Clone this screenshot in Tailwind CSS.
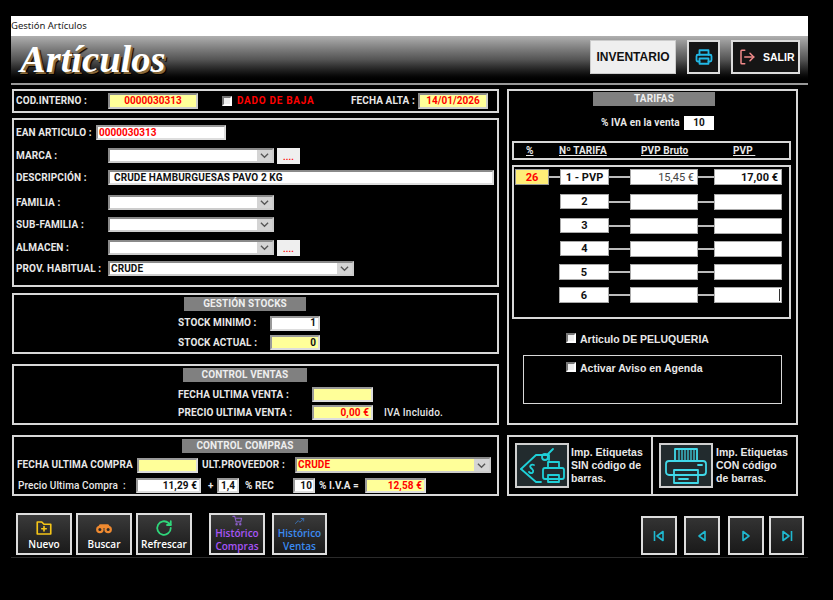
<!DOCTYPE html>
<html lang="es">
<head>
<meta charset="utf-8">
<title>Gestión Artículos</title>
<script src="https://cdn.jsdelivr.net/npm/@tailwindcss/browser@4"></script>
</head>
<body class="bg-black">
<div class="w-[833px] h-[600px] overflow-hidden bg-black pt-[16px] pl-[11px] font-['Roboto',sans-serif] text-[10px] font-bold tracking-[0.1px] text-[#e8e8e8] leading-none whitespace-nowrap">
<div class="w-[797px]">

  <div class="h-[20px] bg-white text-[#222] font-['Noto_Sans',sans-serif] font-normal tracking-normal text-[9.5px] flex items-center">Gestión Artículos</div>

  <header class="h-[49px] pb-[2px] border-b-2 border-[#999] bg-gradient-to-b from-[#b0b0b0] via-[#555] to-black flex items-start">
    <div class="ml-[9px] mt-[3px] font-['Liberation_Serif',serif] italic text-[38.5px] leading-[40px] tracking-normal text-white [text-shadow:2px_2px_0_#8a6a3a,3px_3px_1px_#000]">Artículos</div>
    <div class="ml-auto mt-[4px] mr-[8px] flex">
      <div class="w-[86px] h-[34px] bg-[#efefef] border border-[#ccc] flex items-center justify-center text-[#111] text-[12px] font-['Liberation_Sans',sans-serif] tracking-normal">INVENTARIO</div>
      <div class="ml-[11px] w-[33px] h-[34px] bg-[#151515] border-2 border-[#ddd] flex items-center justify-center">
        <svg class="w-[18px] h-[18px]" viewBox="0 0 24 24" fill="none" stroke="#22b8e6" stroke-width="2.4" stroke-linecap="round" stroke-linejoin="round"><path d="M6 9V3h12v6"/><path d="M6 18H4a2 2 0 0 1-2-2v-5a2 2 0 0 1 2-2h16a2 2 0 0 1 2 2v5a2 2 0 0 1-2 2h-2"/><rect x="6" y="14" width="12" height="7"/></svg>
      </div>
      <div class="ml-[11px] w-[69px] h-[34px] bg-[#151515] border-2 border-[#ddd] flex items-center pl-[5px] gap-[7px] text-white text-[10.5px] font-['Liberation_Sans',sans-serif] tracking-normal">
        <svg class="w-[18px] h-[18px]" viewBox="0 0 24 24" fill="none" stroke="#f08a8a" stroke-width="2" stroke-linecap="round" stroke-linejoin="round"><path d="M9 21H5a1 1 0 0 1-1-1V4a1 1 0 0 1 1-1h4"/><path d="M16 17l5-5-5-5"/><path d="M21 12H9"/></svg>
        SALIR
      </div>
    </div>
  </header>

  <main class="mt-[4px] ml-[1px] flex items-start">
    <div class="w-[487px] flex flex-col">

      <section class="h-[24px] border-2 border-[#d8d8d8] flex items-center pl-[2px]">
        <span class="w-[92px]">COD.INTERNO :</span>
        <div class="w-[90px] h-[16px] bg-[#ffff99] border-2 border-[#8a8a8a] border-b-[#ccc] border-r-[#ccc] flex items-center justify-center text-[#f00] text-[10px] tracking-normal">0000030313</div>
        <div class="ml-[24px] w-[10px] h-[10px] bg-[#eee] border-2 border-[#777] border-b-white border-r-white"></div>
        <span class="ml-[5px] w-[114px] text-[#f00] tracking-[0.7px]">DADO DE BAJA</span>
        <span class="w-[67px]">FECHA ALTA :</span>
        <div class="w-[70px] h-[16px] bg-[#ffff99] border-2 border-[#8a8a8a] border-b-[#ccc] border-r-[#ccc] flex items-center justify-center text-[#f00] text-[10px] tracking-normal">14/01/2026</div>
      </section>

      <section class="mt-[5px] h-[169px] border-2 border-[#d8d8d8] pl-[2px] pt-[5px] flex flex-col">
        <div class="h-[15px] flex items-center">
          <span class="w-[80px]">EAN ARTICULO :</span>
          <div class="w-[130px] h-[15px] bg-white border-2 border-[#999] border-b-[#ddd] border-r-[#ddd] pl-[1px] flex items-center text-[#f00] text-[10px] tracking-normal">0000030313</div>
        </div>
        <div class="mt-[8px] h-[15px] flex items-center">
          <span class="w-[92px]">MARCA :</span>
          <div class="w-[166px] h-[15px] bg-white border-2 border-[#8a8a8a] border-b-[#ccc] border-r-[#ccc] flex justify-end"><div class="w-[15px] bg-[#d4d4d4] flex items-center justify-center"><svg class="w-[9px] h-[9px]" viewBox="0 0 10 10" fill="none" stroke="#555" stroke-width="1.4"><path d="M1 3l4 4 4-4"/></svg></div></div>
          <div class="ml-[3px] w-[23px] h-[16px] bg-[#efefef] text-[#f00] flex items-end justify-center pb-[2px] text-[9px]">....</div>
        </div>
        <div class="mt-[7px] h-[15px] flex items-center">
          <span class="w-[92px]">DESCRIPCIÓN :</span>
          <div class="w-[386px] h-[15px] bg-white border-2 border-[#8a8a8a] border-b-[#ddd] border-r-[#ddd] pl-[4px] flex items-center text-[#111]">CRUDE HAMBURGUESAS PAVO 2 KG</div>
        </div>
        <div class="mt-[10px] h-[15px] flex items-center">
          <span class="w-[92px]">FAMILIA :</span>
          <div class="w-[166px] h-[15px] bg-white border-2 border-[#8a8a8a] border-b-[#ccc] border-r-[#ccc] flex justify-end"><div class="w-[15px] bg-[#d4d4d4] flex items-center justify-center"><svg class="w-[9px] h-[9px]" viewBox="0 0 10 10" fill="none" stroke="#555" stroke-width="1.4"><path d="M1 3l4 4 4-4"/></svg></div></div>
        </div>
        <div class="mt-[7px] h-[15px] flex items-center">
          <span class="w-[92px]">SUB-FAMILIA :</span>
          <div class="w-[166px] h-[15px] bg-white border-2 border-[#8a8a8a] border-b-[#ccc] border-r-[#ccc] flex justify-end"><div class="w-[15px] bg-[#d4d4d4] flex items-center justify-center"><svg class="w-[9px] h-[9px]" viewBox="0 0 10 10" fill="none" stroke="#555" stroke-width="1.4"><path d="M1 3l4 4 4-4"/></svg></div></div>
        </div>
        <div class="mt-[8px] h-[15px] flex items-center">
          <span class="w-[92px]">ALMACEN :</span>
          <div class="w-[166px] h-[15px] bg-white border-2 border-[#8a8a8a] border-b-[#ccc] border-r-[#ccc] flex justify-end"><div class="w-[15px] bg-[#d4d4d4] flex items-center justify-center"><svg class="w-[9px] h-[9px]" viewBox="0 0 10 10" fill="none" stroke="#555" stroke-width="1.4"><path d="M1 3l4 4 4-4"/></svg></div></div>
          <div class="ml-[3px] w-[23px] h-[16px] bg-[#efefef] text-[#f00] flex items-end justify-center pb-[2px] text-[9px]">....</div>
        </div>
        <div class="mt-[6px] h-[15px] flex items-center">
          <span class="w-[92px]">PROV. HABITUAL :</span>
          <div class="w-[246px] h-[15px] bg-white border-2 border-[#8a8a8a] border-b-[#ccc] border-r-[#ccc] flex justify-between"><span class="pl-[1px] self-center text-[#111]">CRUDE</span><div class="w-[15px] bg-[#d4d4d4] flex items-center justify-center"><svg class="w-[9px] h-[9px]" viewBox="0 0 10 10" fill="none" stroke="#555" stroke-width="1.4"><path d="M1 3l4 4 4-4"/></svg></div></div>
        </div>
      </section>

      <section class="mt-[6px] h-[61px] border-2 border-[#d8d8d8] pt-[2px] flex flex-col">
        <div class="ml-[170px] w-[122px] h-[14px] bg-[#808080] flex items-center justify-center text-[#eee]">GESTIÓN STOCKS</div>
        <div class="mt-[5px] ml-[164px] h-[14px] flex items-center">
          <span class="w-[92px]">STOCK MINIMO :</span>
          <div class="w-[50px] h-[15px] bg-white border-2 border-[#999] border-b-[#ddd] border-r-[#ddd] pr-[2px] flex items-center justify-end text-[#111]">1</div>
        </div>
        <div class="mt-[5px] ml-[164px] h-[15px] flex items-center">
          <span class="w-[92px]">STOCK ACTUAL :</span>
          <div class="w-[50px] h-[15px] bg-[#ffff99] border-2 border-[#999] border-b-[#ddd] border-r-[#ddd] pr-[2px] flex items-center justify-end text-[#111]">0</div>
        </div>
      </section>

      <section class="mt-[10px] h-[61px] border-2 border-[#d8d8d8] pt-[2px] flex flex-col">
        <div class="ml-[169px] w-[124px] h-[14px] bg-[#808080] flex items-center justify-center text-[#eee]">CONTROL VENTAS</div>
        <div class="mt-[5px] ml-[164px] h-[15px] flex items-center">
          <span class="w-[134px]">FECHA ULTIMA VENTA :</span>
          <div class="w-[61px] h-[15px] bg-[#ffff99] border-2 border-[#999] border-b-[#ddd] border-r-[#ddd]"></div>
        </div>
        <div class="mt-[3px] ml-[164px] h-[15px] flex items-center">
          <span class="w-[134px]">PRECIO ULTIMA VENTA :</span>
          <div class="w-[61px] h-[15px] bg-[#ffff99] border-2 border-[#999] border-b-[#ddd] border-r-[#ddd] pr-[2px] flex items-center justify-end text-[#f00]">0,00 €</div>
          <span class="ml-[11px] font-medium text-[10px] tracking-[0.2px]">IVA Incluido.</span>
        </div>
      </section>

      <section class="mt-[10px] h-[61px] border-2 border-[#d8d8d8] pt-[2px] flex flex-col">
        <div class="ml-[168px] w-[126px] h-[14px] bg-[#808080] flex items-center justify-center text-[#eee]">CONTROL COMPRAS</div>
        <div class="mt-[4px] ml-[3px] h-[16px] flex items-center">
          <span class="w-[120px]">FECHA ULTIMA COMPRA</span>
          <div class="w-[61px] h-[15px] bg-[#ffff99] border-2 border-[#999] border-b-[#ddd] border-r-[#ddd]"></div>
          <span class="ml-[4px] w-[93px]">ULT.PROVEEDOR :</span>
          <div class="w-[196px] h-[16px] bg-[#ffff99] border-2 border-[#8a8a8a] border-b-[#ccc] border-r-[#ccc] flex justify-between"><span class="pl-[1px] self-center text-[#f00]">CRUDE</span><div class="w-[15px] bg-[#d4d4d4] flex items-center justify-center"><svg class="w-[9px] h-[9px]" viewBox="0 0 10 10" fill="none" stroke="#555" stroke-width="1.4"><path d="M1 3l4 4 4-4"/></svg></div></div>
        </div>
        <div class="mt-[5px] ml-[4px] h-[15px] flex items-center">
          <span class="w-[118px] font-medium text-[10px]">Precio Ultima Compra&nbsp; :</span>
          <div class="w-[65px] h-[15px] bg-white border-2 border-[#999] border-b-[#ddd] border-r-[#ddd] pr-[2px] flex items-center justify-end text-[#111]">11,29 €</div>
          <span class="ml-[7px] w-[9px]">+</span>
          <div class="w-[22px] h-[15px] bg-white border-2 border-[#999] border-b-[#ddd] border-r-[#ddd] flex items-center justify-center text-[#111]">1,4</div>
          <span class="ml-[6px] w-[48px]">% REC</span>
          <div class="w-[22px] h-[15px] bg-white border-2 border-[#999] border-b-[#ddd] border-r-[#ddd] pr-[1px] flex items-center justify-end text-[#111]">10</div>
          <span class="ml-[4px] w-[46px]">% I.V.A =</span>
          <div class="w-[61px] h-[15px] bg-[#ffff99] border-2 border-[#999] border-b-[#ddd] border-r-[#ddd] pr-[2px] flex items-center justify-end text-[#f00]">12,58 €</div>
        </div>
      </section>
    </div>

    <div class="ml-[8px] w-[291px] flex flex-col">
      <section class="h-[336px] border-2 border-[#d8d8d8] px-[3px] pt-[1px] flex flex-col">
        <div class="ml-[81px] w-[122px] h-[14px] bg-[#808080] flex items-center justify-center text-[#eee]">TARIFAS</div>
        <div class="mt-[10px] ml-[89px] h-[14px] flex items-center">
          <span class="w-[83px]">% IVA en la venta</span>
          <div class="w-[30px] h-[14px] bg-white flex items-center justify-center text-[#111]">10</div>
        </div>
        <div class="mt-[11px] w-[279px] h-[19px] border-2 border-[#d8d8d8] flex items-center underline">
          <span class="ml-[12px] w-[33px]">%</span>
          <span class="w-[82px]">Nº TARIFA</span>
          <span class="w-[92px]">PVP Bruto</span>
          <span>PVP&nbsp;</span>
        </div>
        <div class="mt-[5px] w-[279px] h-[154px] border-2 border-[#d8d8d8] pl-[1px] pt-[2px] flex flex-col text-[#111]">
          <div class="h-[16px] flex items-center">
            <div class="w-[34px] h-[16px] bg-[#ffee77] border border-[#999] flex items-center justify-center text-[#f00] text-[11px] tracking-normal">26</div>
            <div class="w-[11px] h-[2px] bg-[#bbb]"></div>
            <div class="w-[49px] h-[16px] bg-white border border-[#aaa] flex items-center justify-center text-[11px] tracking-normal">1 - PVP</div>
            <div class="w-[21px] h-[2px] bg-[#bbb]"></div>
            <div class="w-[68px] h-[16px] bg-white border border-[#aaa] pr-[3px] flex items-center justify-end text-[#444] font-normal text-[11px] tracking-normal">15,45 €</div>
            <div class="w-[16px] h-[2px] bg-[#bbb]"></div>
            <div class="w-[68px] h-[16px] bg-white border border-[#aaa] pr-[3px] flex items-center justify-end text-[11px] tracking-normal">17,00 €</div>
          </div>
          <div class="mt-[9px] h-[15px] flex items-center pl-[45px]">
            <div class="w-[49px] h-[15px] bg-white border border-[#aaa] flex items-center justify-center text-[11px]">2</div>
            <div class="w-[21px] h-[2px] bg-[#bbb]"></div>
            <div class="w-[68px] h-[16px] bg-white border border-[#aaa]"></div>
            <div class="w-[16px] h-[2px] bg-[#bbb]"></div>
            <div class="w-[68px] h-[16px] bg-white border border-[#aaa]"></div>
          </div>
          <div class="mt-[9px] h-[15px] flex items-center pl-[45px]">
            <div class="w-[49px] h-[15px] bg-white border border-[#aaa] flex items-center justify-center text-[11px]">3</div>
            <div class="w-[21px] h-[2px] bg-[#bbb]"></div>
            <div class="w-[68px] h-[16px] bg-white border border-[#aaa]"></div>
            <div class="w-[16px] h-[2px] bg-[#bbb]"></div>
            <div class="w-[68px] h-[16px] bg-white border border-[#aaa]"></div>
          </div>
          <div class="mt-[8px] h-[15px] flex items-center pl-[45px]">
            <div class="w-[49px] h-[15px] bg-white border border-[#aaa] flex items-center justify-center text-[11px]">4</div>
            <div class="w-[21px] h-[2px] bg-[#bbb]"></div>
            <div class="w-[68px] h-[16px] bg-white border border-[#aaa]"></div>
            <div class="w-[16px] h-[2px] bg-[#bbb]"></div>
            <div class="w-[68px] h-[16px] bg-white border border-[#aaa]"></div>
          </div>
          <div class="mt-[8px] h-[16px] flex items-center pl-[44px]">
            <div class="w-[50px] h-[16px] bg-white border border-[#aaa] flex items-center justify-center text-[11px]">5</div>
            <div class="w-[21px] h-[2px] bg-[#bbb]"></div>
            <div class="w-[68px] h-[16px] bg-white border border-[#aaa]"></div>
            <div class="w-[16px] h-[2px] bg-[#bbb]"></div>
            <div class="w-[68px] h-[16px] bg-white border border-[#aaa]"></div>
          </div>
          <div class="mt-[7px] h-[16px] flex items-center pl-[44px]">
            <div class="w-[50px] h-[16px] bg-white border border-[#aaa] flex items-center justify-center text-[11px]">6</div>
            <div class="w-[21px] h-[2px] bg-[#bbb]"></div>
            <div class="w-[68px] h-[16px] bg-white border border-[#aaa]"></div>
            <div class="w-[16px] h-[2px] bg-[#bbb]"></div>
            <div class="w-[68px] h-[16px] bg-white border border-[#aaa] flex justify-end pr-[1px] py-[1px]"><div class="w-[1px] bg-[#333]"></div></div>
          </div>
        </div>
        <div class="mt-[14px] ml-[54px] h-[10px] flex items-center">
          <div class="w-[10px] h-[10px] bg-[#eee] border-2 border-[#777] border-b-white border-r-white"></div>
          <span class="ml-[4px] mt-[2px] text-[10.5px] font-['Liberation_Sans',sans-serif] tracking-normal">Articulo DE PELUQUERIA</span>
        </div>
        <div class="mt-[12px] ml-[11px] w-[259px] h-[49px] border border-[#d8d8d8] pl-[42px] pt-[6px]">
          <div class="h-[10px] flex items-center">
            <div class="w-[10px] h-[10px] bg-[#eee] border-2 border-[#777] border-b-white border-r-white"></div>
            <span class="ml-[4px] mt-[2px] text-[10.5px] font-['Liberation_Sans',sans-serif] tracking-normal">Activar Aviso en Agenda</span>
          </div>
        </div>
      </section>

      <section class="mt-[10px] h-[61px] border-2 border-[#d8d8d8] flex">
        <div class="w-[144px] border-r-2 border-[#d8d8d8] flex items-center pl-[6px]">
          <div class="w-[54px] h-[45px] bg-[#222b2e] border-2 border-[#d0d0d0] flex items-center justify-center">
            <svg class="w-[46px] h-[38px]" viewBox="0 0 46 38" fill="none" stroke="#1fd0d8" stroke-width="1.8" stroke-linejoin="round" stroke-linecap="round"><path d="M2 22 L17 8 H30 V13"/><path d="M2 22 L17 35 H22"/><circle cx="26" cy="10" r="3"/><path d="M28 8 L34 2"/><path d="M15 18c-3-1-5 1-3 3s3 2 2 4-3 1-4 0"/><path d="M29 21v-6h11v6"/><rect x="24" y="21" width="21" height="11" rx="2"/><rect x="29" y="28" width="11" height="7"/></svg>
          </div>
          <div class="ml-[2px] text-[10.5px] leading-[13px] font-['Liberation_Sans',sans-serif] tracking-normal whitespace-pre">Imp. Etiquetas
SIN código de
barras.</div>
        </div>
        <div class="flex-1 flex items-center pl-[6px]">
          <div class="w-[54px] h-[45px] bg-[#222b2e] border-2 border-[#d0d0d0] flex items-center justify-center">
            <svg class="w-[44px] h-[38px]" viewBox="0 0 44 38" fill="none" stroke="#40d8e8" stroke-width="1.8" stroke-linejoin="round" stroke-linecap="round"><path d="M11 14V2h22v12"/><path d="M15 3v10M18 3v10M21 3v10M24 3v10M27 3v10M30 3v10" stroke-width="1.2"/><rect x="2" y="14" width="40" height="14" rx="3"/><path d="M34 18h4"/><rect x="10" y="23" width="24" height="13"/><path d="M15 28h14M15 32h9"/></svg>
          </div>
          <div class="ml-[3px] text-[10.5px] leading-[13px] font-['Liberation_Sans',sans-serif] tracking-normal whitespace-pre">Imp. Etiquetas
CON código
de barras.</div>
        </div>
      </section>
    </div>
  </main>

  <footer class="mt-[17px] pl-[5px] pr-[4px] h-[42px] flex items-start font-['Open_Sans',sans-serif] tracking-normal text-[10px] font-semibold">
    <div class="w-[56px] h-[42px] border-2 border-[#ddd] bg-gradient-to-b from-[#3a3a3a] to-[#1a1a1a] flex flex-col items-center pt-[4px] gap-[2px] text-white">
      <svg class="w-[18px] h-[18px]" viewBox="0 0 24 24" fill="none" stroke="#f5c518" stroke-width="2.2" stroke-linecap="round" stroke-linejoin="round"><path d="M3 4h6l3 3h9v13H3z"/><path d="M12 10v6M9 13h6"/></svg>
      Nuevo
    </div>
    <div class="ml-[4px] w-[56px] h-[42px] border-2 border-[#ddd] bg-gradient-to-b from-[#3a3a3a] to-[#1a1a1a] flex flex-col items-center pt-[4px] gap-[2px] text-white">
      <svg class="w-[18px] h-[18px]" viewBox="0 0 24 24" fill="#f08a30"><circle cx="6.5" cy="14" r="5"/><circle cx="17.5" cy="14" r="5"/><rect x="5" y="7" width="14" height="5" rx="2"/><circle cx="6.5" cy="14" r="2" fill="#2a2a2a"/><circle cx="17.5" cy="14" r="2" fill="#2a2a2a"/></svg>
      Buscar
    </div>
    <div class="ml-[4px] w-[56px] h-[42px] border-2 border-[#ddd] bg-gradient-to-b from-[#3a3a3a] to-[#1a1a1a] flex flex-col items-center pt-[4px] gap-[2px] text-white">
      <svg class="w-[18px] h-[18px]" viewBox="0 0 24 24" fill="none" stroke="#2fd67a" stroke-width="2.4" stroke-linecap="round" stroke-linejoin="round"><path d="M21 12a9 9 0 1 1-3-6.7L21 8"/><path d="M21 3v5h-5"/></svg>
      Refrescar
    </div>
    <div class="ml-[17px] w-[56px] h-[42px] border-2 border-[#ddd] bg-gradient-to-b from-[#3a3a3a] to-[#1a1a1a] flex flex-col items-center text-[#a855f7] leading-[13px]">
      <svg class="w-[11px] h-[11px]" viewBox="0 0 24 24" fill="none" stroke="#8b5fc7" stroke-width="2.4" stroke-linecap="round" stroke-linejoin="round"><path d="M2 3h4l3 12h10l2-8H7"/><circle cx="10" cy="20" r="1.5"/><circle cx="18" cy="20" r="1.5"/></svg>
      <span class="mt-[1px]">Histórico</span><span>Compras</span>
    </div>
    <div class="ml-[7px] w-[55px] h-[42px] border-2 border-[#ddd] bg-gradient-to-b from-[#3a3a3a] to-[#1a1a1a] flex flex-col items-center text-[#3b8af0] leading-[13px]">
      <svg class="w-[11px] h-[10px] mt-[1px]" viewBox="0 0 24 24" fill="none" stroke="#3b6fb0" stroke-width="2.4" stroke-linecap="round" stroke-linejoin="round"><path d="M2 18l7-7 4 4 9-9"/><path d="M16 6h6v6"/></svg>
      <span class="mt-[1px]">Histórico</span><span>Ventas</span>
    </div>
    <div class="ml-auto mt-[3px] flex">
      <div class="w-[36px] h-[39px] border-2 border-[#ddd] bg-gradient-to-b from-[#333] to-[#1a1a1a] flex items-center justify-center">
        <svg class="w-[12px] h-[12px]" viewBox="0 0 12 12" fill="none" stroke="#1fb8d0" stroke-width="1.6" stroke-linejoin="round"><path d="M1.5 1v10"/><path d="M10 1.5v9L4 6z"/></svg>
      </div>
      <div class="ml-[7px] w-[36px] h-[39px] border-2 border-[#ddd] bg-gradient-to-b from-[#333] to-[#1a1a1a] flex items-center justify-center">
        <svg class="w-[10px] h-[12px]" viewBox="0 0 10 12" fill="none" stroke="#1fb8d0" stroke-width="1.6" stroke-linejoin="round"><path d="M8 1.5v9L2 6z"/></svg>
      </div>
      <div class="ml-[8px] w-[36px] h-[39px] border-2 border-[#ddd] bg-gradient-to-b from-[#333] to-[#1a1a1a] flex items-center justify-center">
        <svg class="w-[10px] h-[12px]" viewBox="0 0 10 12" fill="none" stroke="#1fb8d0" stroke-width="1.6" stroke-linejoin="round"><path d="M2 1.5v9L8 6z"/></svg>
      </div>
      <div class="ml-[5px] w-[35px] h-[39px] border-2 border-[#ddd] bg-gradient-to-b from-[#333] to-[#1a1a1a] flex items-center justify-center">
        <svg class="w-[12px] h-[12px]" viewBox="0 0 12 12" fill="none" stroke="#1fb8d0" stroke-width="1.6" stroke-linejoin="round"><path d="M10.5 1v10"/><path d="M2 1.5v9L8 6z"/></svg>
      </div>
    </div>
  </footer>
  <div class="mt-[2px] h-px bg-[#2a2a2a]"></div>
</div>
</div>
</body>
</html>
